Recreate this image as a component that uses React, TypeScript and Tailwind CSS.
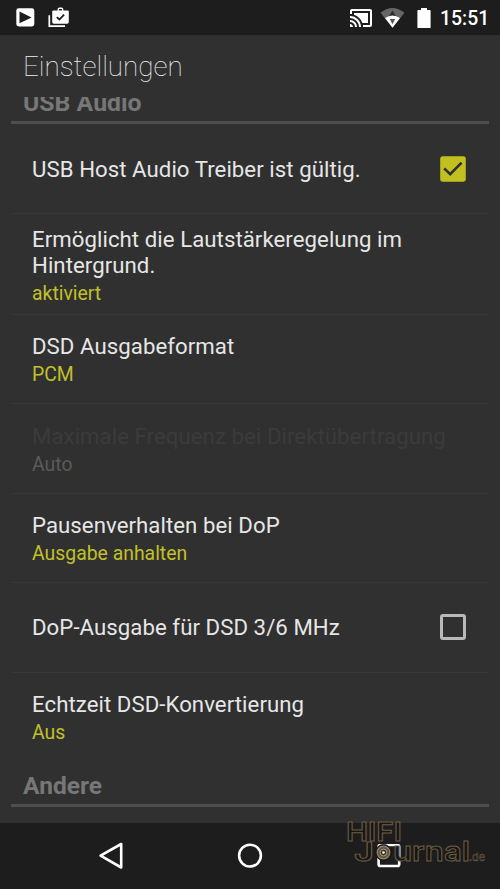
import { MdCastConnected } from "react-icons/md";

type Row = {
  title: string;
  summary?: string;
  checked?: boolean;
  disabled?: boolean;
  size: string;
};

const rows: Row[] = [
  { title: "USB Host Audio Treiber ist gültig.", checked: true, size: "h-[90px] pt-[32px]" },
  {
    title: "Ermöglicht die Lautstärkeregelung im Hintergrund.",
    summary: "aktiviert",
    size: "h-[101px] pt-[11.5px]",
  },
  { title: "DSD Ausgabeformat", summary: "PCM", size: "h-[89px] pt-[18px]" },
  {
    title: "Maximale Frequenz bei Direktübertragung",
    summary: "Auto",
    disabled: true,
    size: "h-[90px] pt-[19px]",
  },
  { title: "Pausenverhalten bei DoP", summary: "Ausgabe anhalten", size: "h-[89px] pt-[18px]" },
  { title: "DoP-Ausgabe für DSD 3/6 MHz", checked: false, size: "h-[90px] pt-[31px]" },
  { title: "Echtzeit DSD-Konvertierung", summary: "Aus", size: "h-[89px] pt-[18px] border-transparent" },
];

function StatusBar() {
  return (
    <div className="flex h-[35px] shrink-0 items-center bg-[#1d1d1d] text-white">
      <svg className="ml-4" width="19" height="19" viewBox="0 0 19 19">
        <rect x="0.3" y="0.3" width="18" height="18.2" rx="2.4" fill="#fff" />
        <path d="M3.5 3.4 15.6 9.4 3.5 15.3Z" fill="#1d1d1d" />
      </svg>
      <svg className="ml-[13px]" width="22" height="22" viewBox="0 0 22 22">
        <path d="M1.3 8.2V19.2H17" fill="none" stroke="#fff" strokeWidth="1.7" />
        <path
          d="M5.2 3.6H9.6V2.2Q9.6 .6 11.3 .6H13.6Q15.3 .6 15.3 2.2V3.6H19.8Q20.8 3.6 20.8 4.6V15Q20.8 16.7 19.1 16.7H5.9Q4.2 16.7 4.2 15V4.6Q4.2 3.6 5.2 3.6ZM11 3.6H13.9V2H11Z"
          fill="#fff"
          fillRule="evenodd"
        />
        <path d="m8.8 10.1 2.6 2.4 4.7-4.9" fill="none" stroke="#1d1d1d" strokeWidth="1.8" />
      </svg>
      <div className="grow" />
      <MdCastConnected size={24} />
      <svg className="ml-[7px]" width="26" height="22" viewBox="0 0 26 22">
        <path d="M0.5 5.8Q12.5-3.6 24.5 5.8L12.5 20.8Z" fill="#666" />
        <path d="M9 9.2 12.5 3.6 16 9.2Z" fill="#2b2b2b" />
        <path d="M5 11Q12.5 5.8 20 11L12.5 20.8Z" fill="#fff" />
        <path d="M9.8 12H15.2L12.5 17.3Z" fill="#555" />
      </svg>
      <svg className="ml-[11px]" width="14" height="22" viewBox="0 0 14 22">
        <path d="M4 1H10V3H13Q13.6 3 13.6 3.8V20.4Q13.6 21 13 21H1Q.4 21 .4 20.4V3.8Q.4 3 1 3H4Z" fill="#fff" />
      </svg>
      <span className="ml-[9px] w-[60px] pt-[2px] text-[19.4px] leading-6 font-medium">15:51</span>
    </div>
  );
}

function CheckBox({ checked }: { checked: boolean }) {
  if (!checked) {
    return <div className="size-[26px] shrink-0 rounded-[3px] border-[3px] border-[#b9b9b9]" />;
  }
  return (
    <svg className="shrink-0" width="26" height="26" viewBox="0 0 26 26">
      <rect x="0.2" y="0.2" width="25.6" height="25.6" rx="2.8" fill="#c0c020" />
      <path d="m4.2 12.4 6 5.8L21.6 6.7" fill="none" stroke="#303030" strokeWidth="2.6" />
    </svg>
  );
}

function PreferenceRow({ title, summary, checked, disabled, size }: Row) {
  return (
    <div className={`mx-[11px] flex shrink-0 border-b border-[#373737] pr-[23px] pl-[21px] ${size}`}>
      <div className="grow">
        <div
          className={`text-[22.2px] leading-[26px] tracking-[0.06px] ${disabled ? "text-[#3b3b3b]" : "text-[#e6e6e6]"}`}
        >
          {title}
        </div>
        {summary && (
          <div
            className={`pt-[1px] text-[19.4px] leading-[30px] ${disabled ? "text-[#5a5a5a]" : "text-[#c0c02a]"}`}
          >
            {summary}
          </div>
        )}
      </div>
      {checked !== undefined && <CheckBox checked={checked} />}
    </div>
  );
}

function Watermark() {
  return (
    <svg
      className="absolute right-[10px] bottom-[20px] overflow-visible"
      width="148"
      height="50"
      viewBox="342 819 148 50"
      fontFamily="Inter, 'Liberation Sans', sans-serif"
      fill="#171615"
      stroke="#6e5d43"
      strokeWidth="0.9"
    >
      <text x="346" y="841" fontSize="25" fontWeight="600" textLength="56" lengthAdjust="spacingAndGlyphs">
        HIFI
      </text>
      <text x="354" y="860.5" fontSize="26" fontWeight="600" textLength="20" lengthAdjust="spacingAndGlyphs">
        J
      </text>
      <text x="393" y="860.5" fontSize="27" fontWeight="600" textLength="77" lengthAdjust="spacingAndGlyphs">
        urnal
      </text>
      <text x="469" y="860.5" fontSize="11" strokeWidth="0.5" textLength="16" lengthAdjust="spacingAndGlyphs">
        .de
      </text>
      <circle cx="383.5" cy="852.5" r="8" fill="#1b1916" stroke="#171615" />
      <circle cx="383.5" cy="852.5" r="6.3" fill="#62563f" stroke="#94866c" strokeWidth="1.2" />
      <circle cx="383.5" cy="852.5" r="3.4" fill="#3a3226" stroke="#b0a48c" />
      <circle cx="383.5" cy="852.5" r="1.3" fill="#fff" stroke="none" />
    </svg>
  );
}

function NavBar() {
  return (
    <div className="relative flex h-[66px] shrink-0 items-center bg-[#1d1d1d]">
      <svg className="ml-[98px]" width="27" height="28" viewBox="0 0 27 28">
        <path d="M2.6 13.7 23.2 2V25.5Z" fill="none" stroke="#fff" strokeWidth="2.6" strokeLinejoin="round" />
      </svg>
      <svg className="ml-[112px]" width="26" height="26" viewBox="0 0 26 26">
        <circle cx="13" cy="12.6" r="10.9" fill="none" stroke="#fff" strokeWidth="2.6" />
      </svg>
      <svg className="ml-[114px]" width="24" height="24" viewBox="0 0 24 24">
        <rect x="1.6" y="1" width="20.6" height="21" rx="1.8" fill="none" stroke="#fff" strokeWidth="2.6" />
      </svg>
      <Watermark />
    </div>
  );
}

export default function App() {
  return (
    <div className="flex h-[889px] w-[500px] flex-col overflow-hidden bg-[#303030] font-[Roboto,sans-serif]">
      <StatusBar />
      <h1 className="h-[62px] shrink-0 pt-[15px] pl-[23px] text-[27.8px] leading-[33px] font-thin text-[#eee]">
        Einstellungen
      </h1>

      {/* Scrolled list, the first heading is cut off by the toolbar */}
      <div className="flex h-[726px] shrink-0 flex-col overflow-hidden">
        <div className="mx-[11px] h-[27px] shrink-0 border-b-[3px] border-[#4e4e4e] pl-3">
          <h2 className="-mt-[9px] text-[24.8px] leading-[30px] font-bold text-[#777]">USB Audio</h2>
        </div>
        {rows.map((row) => (
          <PreferenceRow key={row.title} {...row} />
        ))}
        <div className="mx-[11px] h-[45px] shrink-0 border-b-[3px] border-[#4e4e4e] pl-3">
          <h2 className="pt-[9px] text-[24.6px] leading-[30px] font-bold text-[#777]">Andere</h2>
        </div>
      </div>
      <NavBar />
    </div>
  );
}
